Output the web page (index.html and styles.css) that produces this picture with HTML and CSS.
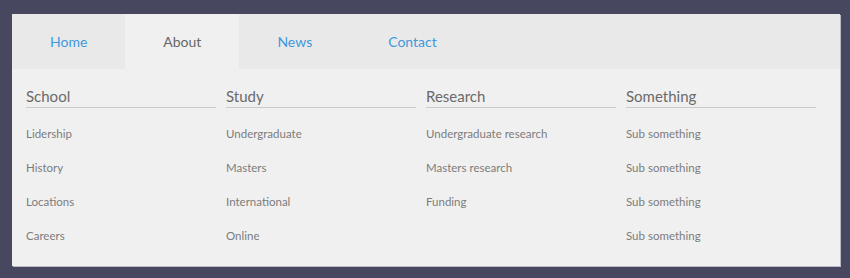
FILE: index.html
```html
<!DOCTYPE html>
<html lang="en">
<head>
    <meta charset="UTF-8">
    <meta name="viewport" content="width=device-width, initial-scale=1.0">
    <title>Mega Menu</title>
    <link rel="stylesheet" href="styles.css">
</head>
<body>

    <!-- Menu box -->
    <div class="menu">
        <nav class="menu-bar">
            <a href="#" class="menu-link">Home</a>
            <a href="#" class="menu-link active">About</a>
            <a href="#" class="menu-link">News</a>
            <a href="#" class="menu-link">Contact</a>
        </nav>

        <!-- Dropdown for About -->
        <div class="mega">
            <div class="mega-col">
                <h3>School</h3>
                <ul>
                    <li><a href="#">Lidership</a></li>
                    <li><a href="#">History</a></li>
                    <li><a href="#">Locations</a></li>
                    <li><a href="#">Careers</a></li>
                </ul>
            </div>
            <div class="mega-col">
                <h3>Study</h3>
                <ul>
                    <li><a href="#">Undergraduate</a></li>
                    <li><a href="#">Masters</a></li>
                    <li><a href="#">International</a></li>
                    <li><a href="#">Online</a></li>
                </ul>
            </div>
            <div class="mega-col">
                <h3>Research</h3>
                <ul>
                    <li><a href="#">Undergraduate research</a></li>
                    <li><a href="#">Masters research</a></li>
                    <li><a href="#">Funding</a></li>
                </ul>
            </div>
            <div class="mega-col">
                <h3>Something</h3>
                <ul>
                    <li><a href="#">Sub something</a></li>
                    <li><a href="#">Sub something</a></li>
                    <li><a href="#">Sub something</a></li>
                    <li><a href="#">Sub something</a></li>
                </ul>
            </div>
        </div>
    </div>

</body>
</html>
```

FILE: styles.css
```css
body {
    margin: 0;
    padding: 14px 10px 12px 12px;
    font-family: 'Lato', sans-serif;
    background-color: #47475f;
}

.menu {
    background-color: #f0f0f0;
    box-shadow: 1px 1px 0 #b9bac4;
}

.menu-bar {
    display: flex;
    height: 55px;
    background-color: #e9e9e9;
}

.menu-link {
    padding: 0 38px;
    display: flex;
    align-items: center;
    color: #3f98dc;
    text-decoration: none;
    font-size: 14px;
}

.menu-link.active {
    background-color: #f0f0f0;
    color: #666;
}

.mega {
    display: grid;
    grid-template-columns: repeat(4, 190px);
    column-gap: 10px;
    padding: 18px 14px 12px 14px;
    height: 167px;
}

.mega-col h3 {
    margin: 0;
    font-size: 15px;
    font-weight: normal;
    color: #6a6a6a;
    padding-bottom: 2px;
    border-bottom: 1px solid #c9c9c9;
}

.mega-col ul {
    list-style: none;
    margin: 0;
    padding: 0;
    padding-top: 8px;
}

.mega-col li {
    height: 34px;
    display: flex;
    align-items: center;
}

.mega-col li a {
    color: #7c7c7c;
    text-decoration: none;
    font-size: 11.5px;
}
```
